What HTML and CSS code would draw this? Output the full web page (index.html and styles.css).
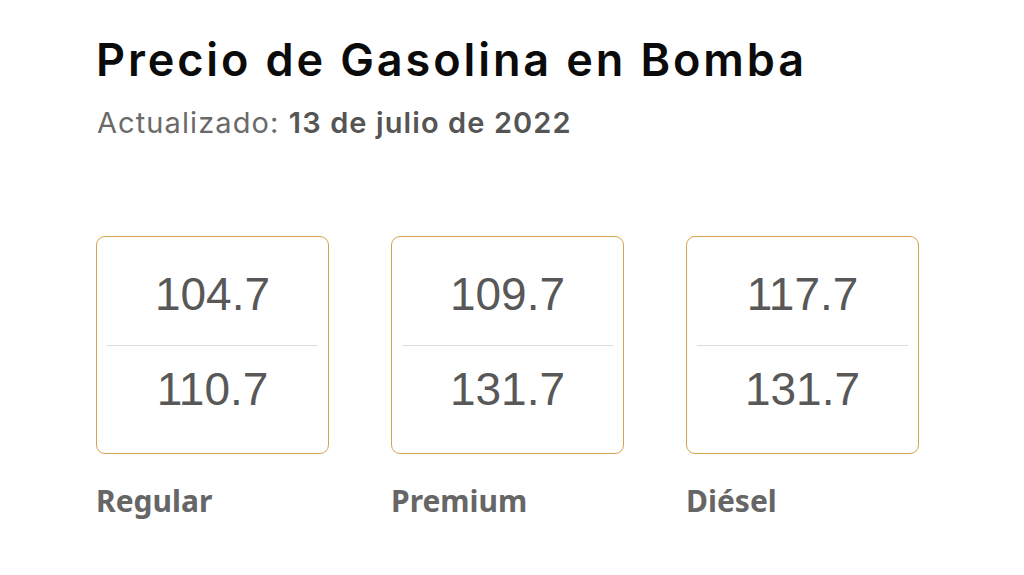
FILE: index.html
```html
<!DOCTYPE html>
<html lang="es">
<head>
<meta charset="utf-8">
<title>Precio de Gasolina en Bomba</title>
<link rel="stylesheet" href="styles.css">
</head>
<body>
<main class="page">
  <h1 class="title">Precio de Gasolina en Bomba</h1>
  <p class="updated">Actualizado: <strong>13 de julio de 2022</strong></p>
  <section class="prices">
    <div class="fuel">
      <div class="card">
        <div class="price">104.7</div>
        <div class="price">110.7</div>
      </div>
      <div class="label">Regular</div>
    </div>
    <div class="fuel">
      <div class="card">
        <div class="price">109.7</div>
        <div class="price">131.7</div>
      </div>
      <div class="label">Premium</div>
    </div>
    <div class="fuel">
      <div class="card">
        <div class="price">117.7</div>
        <div class="price">131.7</div>
      </div>
      <div class="label">Diésel</div>
    </div>
  </section>
</main>
</body>
</html>
```

FILE: styles.css
```css
* { box-sizing: border-box; }
html, body { margin: 0; padding: 0; background: #ffffff; }
body { width: 1024px; height: 575px; overflow: hidden; }
.page {
  padding: 30px 0 0 96px;
}
.title {
  margin: 0;
  font-family: Inter, "Noto Sans", sans-serif;
  font-weight: 600;
  font-size: 45px;
  line-height: 60px;
  color: #0b0b0b;
  letter-spacing: 2.9px;
}
.updated {
  margin: 15px 0 0 1px;
  font-family: Inter, "Noto Sans", sans-serif;
  font-size: 29px;
  line-height: 36px;
  color: #6a6a6a;
  letter-spacing: 1.1px;
}
.updated strong {
  font-weight: 600;
  color: #555555;
}
.prices {
  display: flex;
  gap: 62px;
  margin-top: 95px;
}
.fuel {
  display: flex;
  flex-direction: column;
  width: 233px;
}
.card {
  height: 218px;
  border: 1.5px solid #d4a449;
  border-radius: 9px;
  padding: 0 10px;
  display: flex;
  flex-direction: column;
}
.price {
  display: flex;
  align-items: center;
  justify-content: center;
  font-family: "Liberation Sans", Arial, sans-serif;
  font-size: 46px;
  color: #585858;
}
.price:first-child {
  height: 108px;
  padding-top: 6px;
}
.price:last-child {
  flex: 1;
  padding-bottom: 21px;
  border-top: 1.5px solid #dcdcdc;
}
.label {
  margin-top: 29px;
  font-family: "Noto Sans", sans-serif;
  font-weight: 700;
  font-size: 30px;
  line-height: 36px;
  color: #666666;
}
```
